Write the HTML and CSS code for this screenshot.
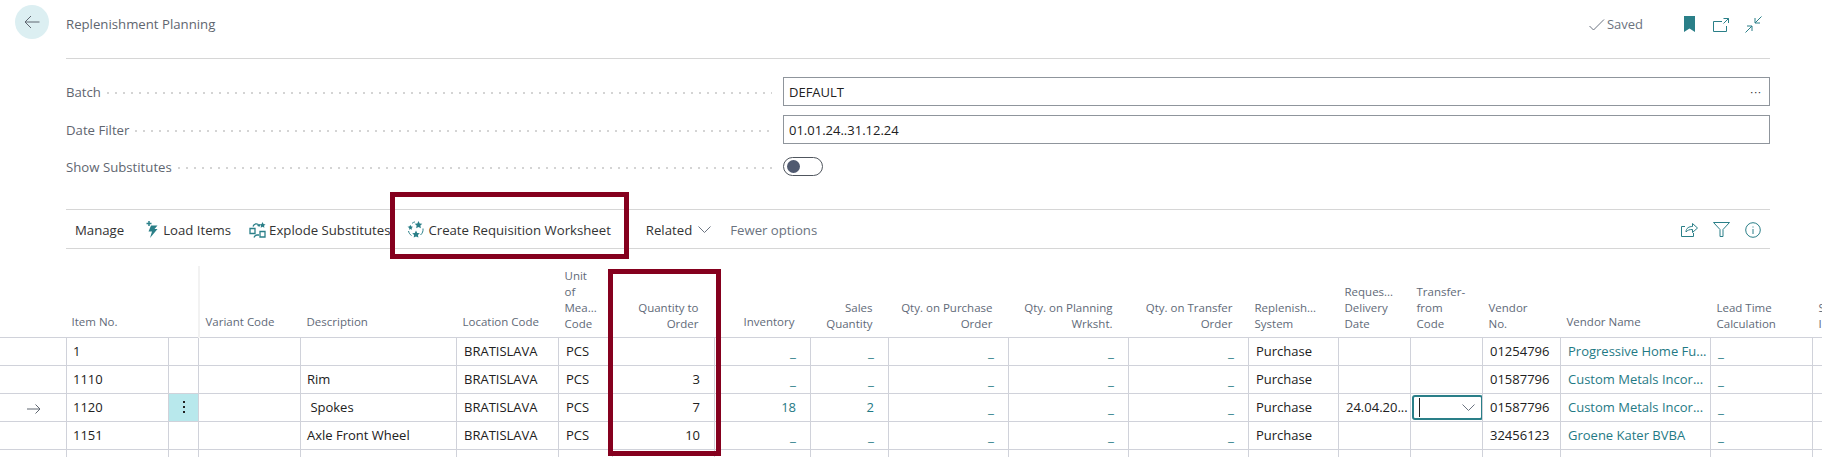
FILE: index.html
```html
<!DOCTYPE html>
<html lang="en">
<head>
<meta charset="utf-8">
<title>Replenishment Planning</title>
<link rel="stylesheet" href="styles.css">
</head>
<body>
<div class="page">
  <header class="top">
    <div class="back"><svg width="16" height="14" viewBox="0 0 16 14"><path d="M15.500 7H1M7 1 1 7l6 6" fill="none" stroke="#5f6670" stroke-width="1"/></svg></div>
    <div class="topbar">
      <span class="title">Replenishment Planning</span>
      <span class="saved"><svg width="16" height="12" viewBox="0 0 16 12"><path d="M.5 7l4 4L15 .5" fill="none" stroke="#6b7380" stroke-width="1"/></svg>Saved</span>
      <svg class="ic bookmark" width="11" height="16" viewBox="0 0 11 16"><path d="M0 0h11v16L5.500 12.500 0 16z" fill="#2a7f88"/></svg>
      <svg class="ic open" width="16" height="14" viewBox="0 0 16 14"><path d="M9 3.500H.5v10h13V8M10.500.5h5V5M15.500.5 10.500 5.500" fill="none" stroke="#2a7f88"/></svg>
      <svg class="ic" width="17" height="17" viewBox="0 0 17 17"><path d="M16.500.5 10 7M10 2v5h5M.5 16.500 7 10M2 10h5v5" fill="none" stroke="#2a7f88"/></svg>
    </div>
  </header>

  <section class="fields">
    <div class="field"><span class="label">Batch</span><span class="leader"></span><div class="input">DEFAULT<span class="more">···</span></div></div>
    <div class="field"><span class="label">Date Filter</span><span class="leader"></span><div class="input">01.01.24..31.12.24</div></div>
    <div class="field short"><span class="label">Show Substitutes</span><span class="leader"></span><div class="toggle"><span class="knob"></span></div></div>
  </section>

  <nav class="toolbar">
    <span class="act manage">Manage</span>
    <span class="act load"><svg width="12" height="17" viewBox="0 0 12 17"><path d="M3 0v5M.5 2.500h5" fill="none" stroke="#2a7f88" stroke-width="1.500"/><path d="M5 4.500h6.500L8.500 8h3L4 17l2-6.500H2.500z" fill="#2a7f88"/></svg>Load Items</span>
    <span class="act explode"><svg width="17" height="16" viewBox="0 0 17 16"><g fill="none" stroke="#2a7f88" stroke-width="1.300"><path d="M1 6.500h5v5H1zM11 9.500h5v5.500h-5z"/><path d="M4 4.500C5 1.500 8.500 1 10 3.500M8.500 3.500l1.700.5.500-1.700M10 13H8C6.500 13 5.500 14 5 15.500"/></g><path d="M13.500 0l1 2 2 .4-1.500 1.400.4 2-1.900-1-1.800 1 .3-2-1.400-1.400 2-.4z" fill="#2a7f88"/></svg>Explode Substitutes</span>
    <span class="act create"><svg width="17" height="17" viewBox="0 0 17 17"><g fill="#2a7f88"><path d="M11.500 0l1.200 2.400 2.600.4-1.900 1.800.5 2.600-2.400-1.200-2.300 1.200.4-2.600-1.900-1.800 2.600-.4zM9 9.500l1.200 2.400 2.600.4-1.900 1.800.5 2.400-2.400-1-2.300 1 .4-2.400-1.900-1.800 2.600-.4zM3.500 4l.8 1.500 1.700.3-1.300 1.200.3 1.700-1.500-.8-1.500.8.300-1.700L.5 5.800l1.700-.3z"/></g><path d="M1.500 10c.4 2 1.500 3.500 3 4.500M16 7.500c.3 2.500-.5 4.800-2.500 6.500M5 2.500C6 1.500 7 1 8 1" fill="none" stroke="#2a7f88"/></svg>Create Requisition Worksheet</span>
    <span class="act related">Related<svg width="13" height="7" viewBox="0 0 13 7"><path d="M.5.500l6 6 6-6" fill="none" stroke="#6b7380"/></svg></span>
    <span class="act fewer">Fewer options</span>
    <span class="tools">
      <svg width="17" height="15" viewBox="0 0 17 15"><path d="M4 4.500H.5v10h12V11M5 10c0-4 3-5.500 6.500-5.500V1.500L16.500 6l-5 4.500V7.500C8.500 7.500 6.500 8 5 10z" fill="none" stroke="#2a7f88"/></svg>
      <svg width="17" height="15" viewBox="0 0 17 15"><path d="M.5.500h16L10 7.500v7H7v-7z" fill="none" stroke="#2a7f88"/></svg>
      <svg width="16" height="16" viewBox="0 0 16 16"><circle cx="8" cy="8" r="7.300" fill="none" stroke="#2a7f88"/><path d="M8 7v5M8 4.500v1" stroke="#2a7f88" fill="none"/></svg>
    </span>
  </nav>

  <div class="grid-wrap">
    <table class="grid">
      <colgroup>
        <col class="c66"><col class="c102"><col class="c30"><col class="c102"><col class="c156"><col class="c102"><col class="c54"><col class="c102"><col class="c96"><col class="c78"><col class="c120"><col class="c120"><col class="c120"><col class="c90"><col class="c72"><col class="c72"><col class="c78"><col class="c150"><col class="c102"><col class="c102">
      </colgroup>
      <thead>
        <tr>
          <th></th><th class="item">Item No.</th><th></th><th class="frozen">Variant Code</th><th>Description</th><th>Location Code</th>
          <th class="multi">Unit<br>of<br>Mea...<br>Code</th>
          <th class="r multi">Quantity to<br>Order</th><th class="r">Inventory</th><th class="r multi">Sales<br>Quantity</th>
          <th class="r multi">Qty. on Purchase<br>Order</th><th class="r multi">Qty. on Planning<br>Wrksht.</th><th class="r multi">Qty. on Transfer<br>Order</th>
          <th class="multi">Replenish...<br>System</th><th class="multi">Reques...<br>Delivery<br>Date</th><th class="multi">Transfer-<br>from<br>Code</th>
          <th class="multi">Vendor<br>No.</th><th>Vendor Name</th><th class="multi">Lead Time<br>Calculation</th><th class="multi last">S<br>I</th>
        </tr>
      </thead>
      <tbody>
        <tr>
          <td class="mark"></td><td class="tight">1</td><td></td><td></td><td class="tight"></td><td>BRATISLAVA</td><td>PCS</td><td class="r"></td>
          <td class="r"><a class="dash">_</a></td><td class="r"><a class="dash">_</a></td><td class="r"><a class="dash">_</a></td><td class="r"><a class="dash">_</a></td><td class="r"><a class="dash">_</a></td>
          <td>Purchase</td><td></td><td></td><td>01254796</td><td class="link">Progressive Home Fu...</td><td><a class="dash">_</a></td><td></td>
        </tr>
        <tr>
          <td class="mark"></td><td class="tight">1110</td><td></td><td></td><td class="tight">Rim</td><td>BRATISLAVA</td><td>PCS</td><td class="r">3</td>
          <td class="r"><a class="dash">_</a></td><td class="r"><a class="dash">_</a></td><td class="r"><a class="dash">_</a></td><td class="r"><a class="dash">_</a></td><td class="r"><a class="dash">_</a></td>
          <td>Purchase</td><td></td><td></td><td>01587796</td><td class="link">Custom Metals Incor...</td><td><a class="dash">_</a></td><td></td>
        </tr>
        <tr>
          <td class="mark cur"><svg width="14" height="10" viewBox="0 0 14 10"><path d="M0 5h13M8.500.5 13 5 8.500 9.500" fill="none" stroke="#5f6670"/></svg></td><td class="tight">1120</td><td class="menu"><span class="kebab"><i></i><i></i><i></i></span></td><td></td><td class="tight">&nbsp;Spokes</td><td>BRATISLAVA</td><td>PCS</td><td class="r">7</td>
          <td class="r link">18</td><td class="r link">2</td><td class="r"><a class="dash">_</a></td><td class="r"><a class="dash">_</a></td><td class="r"><a class="dash">_</a></td>
          <td>Purchase</td><td>24.04.20...</td>
          <td class="editing"><div class="cell-input"><span class="caret"></span><svg width="13" height="7" viewBox="0 0 13 7"><path d="M.5.500l6 6 6-6" fill="none" stroke="#6b7380"/></svg></div></td>
          <td>01587796</td><td class="link">Custom Metals Incor...</td><td><a class="dash">_</a></td><td></td>
        </tr>
        <tr>
          <td class="mark"></td><td class="tight">1151</td><td></td><td></td><td class="tight">Axle Front Wheel</td><td>BRATISLAVA</td><td>PCS</td><td class="r">10</td>
          <td class="r"><a class="dash">_</a></td><td class="r"><a class="dash">_</a></td><td class="r"><a class="dash">_</a></td><td class="r"><a class="dash">_</a></td><td class="r"><a class="dash">_</a></td>
          <td>Purchase</td><td></td><td></td><td>32456123</td><td class="link">Groene Kater BVBA</td><td><a class="dash">_</a></td><td></td>
        </tr>
        <tr class="tail"><td class="mark"></td><td></td><td></td><td></td><td></td><td></td><td></td><td></td><td></td><td></td><td></td><td></td><td></td><td></td><td></td><td></td><td></td><td></td><td></td><td></td></tr>
      </tbody>
    </table>
  </div>

  <div class="callout callout-action"></div>
  <div class="callout callout-qty"></div>
</div>
</body>
</html>
```
FILE: styles.css
```css
* { box-sizing: border-box; }
html, body { margin: 0; padding: 0; background: #fff; }
body { font-family: "Open Sans", "Noto Sans", sans-serif; font-size: 13px; color: #212121; }
.page { position: relative; width: 1822px; height: 457px; overflow: hidden; }

.top { display: flex; padding-left: 15px; padding-top: 5px; }
.back { width: 34px; height: 34px; border-radius: 50%; background: #dceff2; display: flex; align-items: center; justify-content: center; }
.topbar { margin-left: 17px; width: 1704px; height: 54px; border-bottom: 1px solid #d6d6d6; display: flex; align-items: flex-start; padding-top: 11px; }
.title { font-size: 13.2px; line-height: 17px; color: #5f6670; flex: 1; }
.saved { display: flex; align-items: center; gap: 2px; font-size: 13px; line-height: 17px; color: #6b7380; margin-right: 41px; }
.ic { display: block; margin-right: 16px; }
.ic.bookmark { margin-right: 18px; }
.ic.open { margin-top: 2px; }
.ic:last-child { margin-right: 8px; }

.fields { margin: 18px 52px 0 66px; display: flex; flex-direction: column; gap: 9px; }
.field { display: flex; align-items: center; height: 29px; }
.field.short { height: 29px; margin-top: -1px; }
.label { font-size: 13.2px; color: #5f6670; white-space: nowrap; }
.leader { flex: 1; height: 2px; margin: 2px 11px 0 6px; background: repeating-linear-gradient(90deg, #d4d4d4 0 2px, transparent 2px 8px); }
.input { width: 987px; height: 29px; border: 1px solid #8f959c; padding: 0 5px; line-height: 28px; display: flex; justify-content: space-between; color: #212121; }
.more { color: #333; margin-right: 2px; letter-spacing: 1px; font-size: 11px; }
.toggle { width: 40px; height: 19px; margin-right: 947px; border: 1px solid #50565e; border-radius: 10px; padding: 2px 3px; }
.knob { display: block; width: 13px; height: 13px; border-radius: 50%; background: #505a70; }

.toolbar { position: relative; margin: 28px 52px 0 66px; height: 40px; border-top: 1px solid #d6d6d6; border-bottom: 1px solid #d6d6d6; display: flex; align-items: center; padding: 1px 0 0 9px; font-size: 13.2px; }
.act { display: flex; align-items: center; gap: 5px; color: #333; white-space: nowrap; }
.act svg { display: block; }
.manage { margin-right: 22px; }
.load { margin-right: 18px; }
.explode { gap: 3px; margin-right: 17px; }
.create { gap: 4px; margin-right: 35px; }
.related { gap: 6px; margin-right: 19px; }
.fewer { color: #6b7380; }
.tools { margin-left: auto; margin-right: 9px; display: flex; align-items: center; gap: 15px; }

.grid-wrap { position: absolute; left: 0; top: 266px; width: 1822px; overflow: hidden; }
.grid { border-collapse: collapse; table-layout: fixed; width: 1914.500px; }
.c66 { width: 66.500px; } .c102 { width: 102px; } .c30 { width: 30px; } .c156 { width: 156px; } .c54 { width: 54px; }
.c96 { width: 96px; } .c78 { width: 78px; } .c120 { width: 120px; } .c90 { width: 90px; } .c72 { width: 72px; } .c150 { width: 150px; }
th { height: 71px; padding: 0 6px 5px; font-weight: 400; font-size: 11.5px; line-height: 16px; color: #5f6a78; text-align: left; vertical-align: bottom; border-bottom: 1px solid #d0d2da; white-space: nowrap; overflow: hidden; }
th.multi { padding-bottom: 5px; }
th:not(.multi) { padding-bottom: 7px; }
th.r { text-align: right; padding-right: 16px; }
th.item { padding-left: 5px; }
th.frozen { border-left: 2px solid #f2f2f2; }
td { height: 28px; padding: 0 7px; border: 1px solid #d0d2da; border-top: 0; white-space: nowrap; overflow: hidden; color: #212121; }
td.tight { padding-left: 6px; }
td.mark { border-left: 0; text-align: right; padding: 0 25px 0 0; }
td.mark svg { display: inline-block; vertical-align: middle; }
td.r { text-align: right; padding-right: 14px; }
td.link { color: #1f7a85; }
.dash { position: relative; top: 1px; display: inline-block; line-height: 18px; vertical-align: bottom; font-size: 13.500px; color: #1f7a85; }
td.menu { background: #b8e8ec; padding: 0; text-align: center; }
.kebab { display: flex; flex-direction: column; align-items: center; gap: 3px; }
.kebab i { display: block; width: 2px; height: 2px; background: #222; }
td.editing { padding: 0 0 0 1px; }
.cell-input { width: 71px; height: 25px; border: 2px solid #2a7f88; border-radius: 3px; display: flex; align-items: center; justify-content: space-between; padding: 0 6px 0 5px; }
.caret { width: 1px; height: 19px; background: #222; }
tr.tail td { height: 10px; border-bottom: 0; }

.callout { position: absolute; border: 5px solid #85001e; pointer-events: none; }
.callout-action { left: 390px; top: 192px; width: 239px; height: 67px; }
.callout-qty { left: 608px; top: 269px; width: 113px; height: 187px; }
```
